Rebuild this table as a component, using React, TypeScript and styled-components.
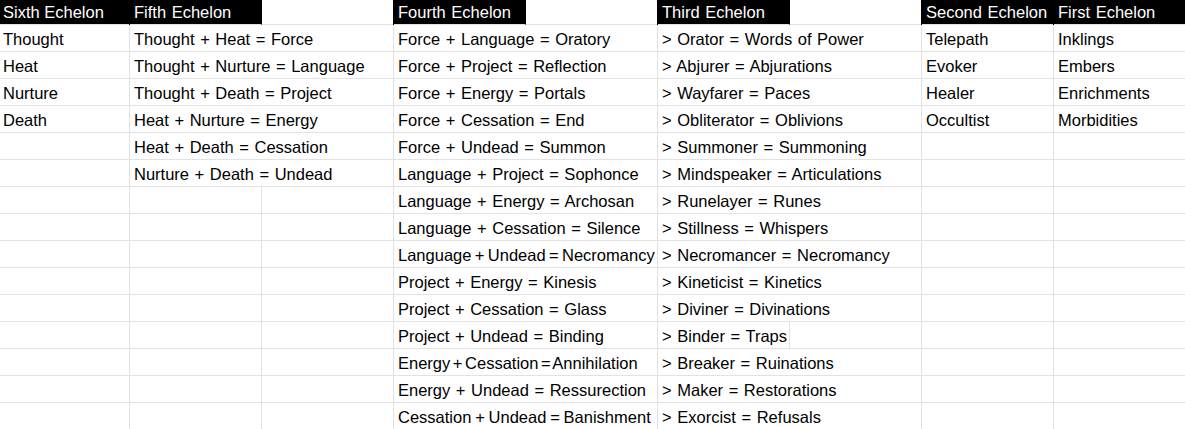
import * as React from 'react'
import styled, { createGlobalStyle } from 'styled-components'

const GlobalStyle = createGlobalStyle`
  html, body {
    margin: 0;
    padding: 0;
    background: #fff;
    overflow: hidden;
  }
`

const COLUMNS = '131px repeat(8, 132px)'

const Sheet = styled.div`
  display: flex;
  flex-direction: column;
  width: 1187px;
  margin-left: -1px;
  overflow: hidden;
  font-family: 'Liberation Sans', Arial, sans-serif;
  font-size: 16.5px;
  color: #000;
`

const Row = styled.div<{ $header?: boolean }>`
  display: grid;
  grid-template-columns: ${COLUMNS};
  height: ${({ $header }) => ($header ? '25px' : '27px')};
`

const Cell = styled.div<{
  $span?: number
  $dark?: boolean
  $header?: boolean
  $ws?: number
}>`
  grid-column: span ${({ $span }) => $span || 1};
  box-sizing: border-box;
  border-right: 1px solid ${({ $dark }) => ($dark ? '#000' : '#e2e2e2')};
  border-bottom: 1px solid #e2e2e2;
  background: ${({ $dark }) => ($dark ? '#000' : '#fff')};
  color: ${({ $dark }) => ($dark ? '#fff' : '#000')};
  box-shadow: ${({ $dark }) => ($dark ? '-1px 0 0 #000' : 'none')};
  padding: ${({ $header }) => ($header ? '3px 0 0 4px' : '5px 0 0 4px')};
  line-height: 18px;
  white-space: nowrap;
  overflow: hidden;
  word-spacing: ${({ $ws }) => ($ws ?? 1)}px;
`

type CellData = { text?: string; span?: number; dark?: boolean; ws?: number }

const header: CellData[] = [
  { text: 'Sixth Echelon', dark: true, ws: 0 },
  { text: 'Fifth Echelon', dark: true },
  {},
  { text: 'Fourth Echelon', dark: true },
  {},
  { text: 'Third Echelon', dark: true },
  {},
  { text: 'Second Echelon', dark: true },
  { text: 'First Echelon', dark: true },
]

const sixth = ['Thought', 'Heat', 'Nurture', 'Death']
const fifth = [
  'Thought + Heat = Force',
  'Thought + Nurture = Language',
  'Thought + Death = Project',
  'Heat + Nurture = Energy',
  'Heat + Death = Cessation',
  'Nurture + Death = Undead',
]
// the long ones are squeezed a little to stay inside two columns
const fourth: [string, number?][] = [
  ['Force + Language = Oratory'],
  ['Force + Project = Reflection'],
  ['Force + Energy = Portals'],
  ['Force + Cessation = End'],
  ['Force + Undead = Summon'],
  ['Language + Project = Sophonce'],
  ['Language + Energy = Archosan'],
  ['Language + Cessation = Silence'],
  ['Language + Undead = Necromancy', -1.2],
  ['Project + Energy = Kinesis'],
  ['Project + Cessation = Glass'],
  ['Project + Undead = Binding'],
  ['Energy + Cessation = Annihilation', -2],
  ['Energy + Undead = Ressurection'],
  ['Cessation + Undead = Banishment', -0.8],
]
const third = [
  '> Orator = Words of Power',
  '> Abjurer = Abjurations',
  '> Wayfarer = Paces',
  '> Obliterator = Oblivions',
  '> Summoner = Summoning',
  '> Mindspeaker = Articulations',
  '> Runelayer = Runes',
  '> Stillness = Whispers',
  '> Necromancer = Necromancy',
  '> Kineticist = Kinetics',
  '> Diviner = Divinations',
  '> Binder = Traps',
  '> Breaker = Ruinations',
  '> Maker = Restorations',
  '> Exorcist = Refusals',
]
const second = ['Telepath', 'Evoker', 'Healer', 'Occultist']
const first = ['Inklings', 'Embers', 'Enrichments', 'Morbidities']

// text that spills into the next column hides the grid line, so it spans two
const buildRow = (i: number): CellData[] => {
  const cells: CellData[] = [{ text: sixth[i] }]
  if (fifth[i]) cells.push({ text: fifth[i], span: 2 })
  else cells.push({}, {})
  cells.push({ text: fourth[i][0], ws: fourth[i][1], span: 2 })
  const t = third[i]
  if (t === '> Binder = Traps') cells.push({ text: t }, {})
  else cells.push({ text: t, span: 2 })
  cells.push({ text: second[i] }, { text: first[i] })
  return cells
}

export default function App() {
  return (
    <>
      <GlobalStyle />
      <Sheet>
        <Row $header>
          {header.map((c, k) => (
            <Cell key={k} $dark={c.dark} $ws={c.ws} $header>
              {c.text}
            </Cell>
          ))}
        </Row>
        {fourth.map((_, i) => (
          <Row key={i}>
            {buildRow(i).map((c, k) => (
              <Cell key={k} $span={c.span} $ws={c.ws}>
                {c.text}
              </Cell>
            ))}
          </Row>
        ))}
      </Sheet>
    </>
  )
}
